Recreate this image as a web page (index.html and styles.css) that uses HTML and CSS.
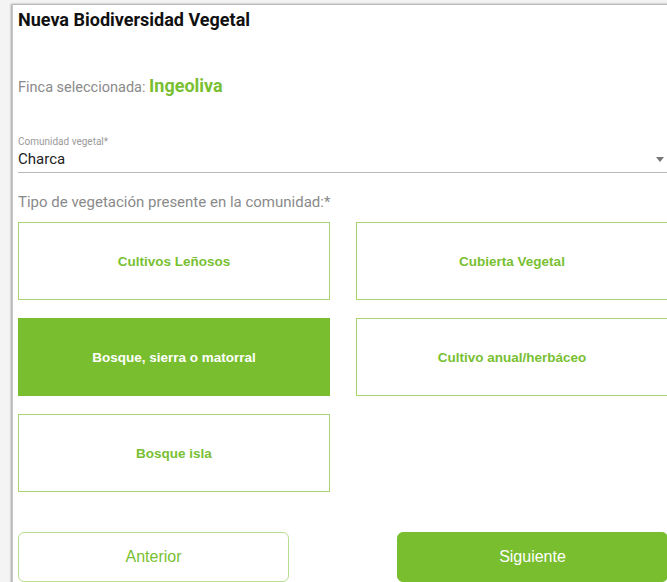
FILE: index.html
```html
<!DOCTYPE html>
<html lang="es">
<head>
<meta charset="utf-8">
<title>Nueva Biodiversidad Vegetal</title>
<link rel="stylesheet" href="styles.css">
</head>
<body>
<div class="card">
  <h1 class="title">Nueva Biodiversidad Vegetal</h1>

  <p class="farm">Finca seleccionada: <span class="farm-name">Ingeoliva</span></p>

  <div class="field">
    <label class="field-label">Comunidad vegetal*</label>
    <div class="select">
      <span class="select-value">Charca</span>
      <svg class="select-arrow" width="8" height="5" viewBox="0 0 8 5"><path d="M0 0h8L4 5z" fill="#777"/></svg>
    </div>
  </div>

  <p class="question">Tipo de vegetación presente en la comunidad:*</p>

  <div class="options">
    <button class="option">Cultivos Leñosos</button>
    <button class="option">Cubierta Vegetal</button>
    <button class="option selected">Bosque, sierra o matorral</button>
    <button class="option">Cultivo anual/herbáceo</button>
    <button class="option">Bosque isla</button>
  </div>

  <div class="nav">
    <button class="nav-btn prev">Anterior</button>
    <button class="nav-btn next">Siguiente</button>
  </div>
</div>
</body>
</html>
```

FILE: styles.css
```css
html, body {
  margin: 0;
  padding: 0;
  background: #f4f4f4;
  overflow: hidden;
  height: 582px;
}

body {
  padding: 5px 0 0 12px;
  font-family: Roboto, "Liberation Sans", sans-serif;
}

.card {
  background: #fff;
  width: 680px;
  height: 600px;
  box-shadow: -1px -1px 2px rgba(0,0,0,0.35);
  border-left: 1px solid #c8c8c8;
  padding: 0 0 0 5px;
  box-sizing: border-box;
}

.title {
  margin: 0;
  padding-top: 3px;
  font-size: 18px;
  font-weight: 700;
  color: #111;
  line-height: 23px;
}

.farm {
  margin: 43px 0 0;
  font-size: 14.5px;
  color: #8a8a8a;
  line-height: 24px;
}

.farm-name {
  color: #79bf32;
  font-weight: 700;
  font-size: 18px;
}

.field {
  margin-top: 36px;
  width: 650px;
}

.field-label {
  display: block;
  font-size: 10px;
  color: #9a9a9a;
  line-height: 12px;
}

.select {
  display: flex;
  align-items: center;
  justify-content: space-between;
  height: 22px;
  border-bottom: 1px solid #b8b8b8;
  padding-bottom: 2px;
}

.select-value {
  font-size: 15px;
  color: #222;
}

.select-arrow {
  margin-right: 4px;
}

.question {
  margin: 20px 0 0;
  font-size: 15px;
  color: #8a8a8a;
  line-height: 18px;
}

.options {
  margin-top: 11px;
  width: 650px;
  display: grid;
  grid-template-columns: 312px 312px;
  column-gap: 26px;
  row-gap: 18px;
}

.option {
  height: 78px;
  background: #fff;
  border: 1.5px solid #a6d572;
  border-radius: 0;
  font-family: "Liberation Sans", Arial, sans-serif;
  font-size: 13.5px;
  font-weight: 700;
  color: #79bf32;
  padding: 0;
}

.option.selected {
  background: #78be2e;
  border-color: #78be2e;
  color: #fff;
}

.nav {
  margin-top: 40px;
  width: 650px;
  display: flex;
  justify-content: space-between;
}

.nav-btn {
  width: 271px;
  height: 50px;
  border-radius: 6px;
  font-family: "Liberation Sans", Arial, sans-serif;
  font-size: 16px;
  padding: 0;
}

.prev {
  background: #fff;
  border: 1.5px solid #b9dd8e;
  color: #79bf32;
}

.next {
  background: #78be2e;
  border: 1.5px solid #78be2e;
  color: #fff;
}
```
